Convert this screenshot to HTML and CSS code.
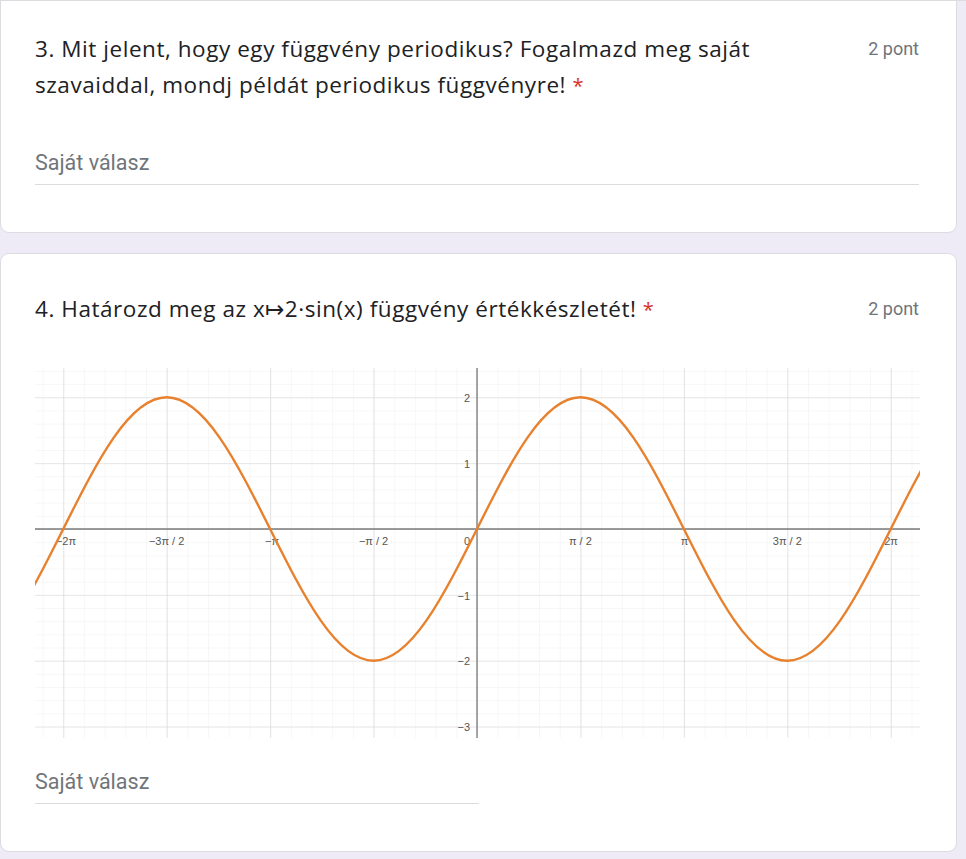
FILE: index.html
```html
<!DOCTYPE html>
<html lang="hu">
<head>
<meta charset="utf-8">
<title>Kérdőív</title>
<link rel="stylesheet" href="styles.css">
</head>
<body>
<div class="topline"></div>
<main class="form">
  <section class="card card-first">
    <div class="q-head">
      <div class="q-title">3. Mit jelent, hogy egy függvény periodikus? Fogalmazd meg saját szavaiddal, mondj példát periodikus függvényre! <span class="req">*</span></div>
      <div class="q-points">2 pont</div>
    </div>
    <div class="answer answer-wide">Saját válasz</div>
  </section>

  <section class="card">
    <div class="q-head">
      <div class="q-title">4. Határozd meg az x↦2·sin(x) függvény értékkészletét! <span class="req">*</span></div>
      <div class="q-points">2 pont</div>
    </div>
    <svg class="graph" width="885" height="370" viewBox="0 0 885 370" xmlns="http://www.w3.org/2000/svg">
      <defs>
        <pattern id="minor" x="442" y="161" width="20.688" height="13.17" patternUnits="userSpaceOnUse">
          <path d="M0 0 V13.17 M0 0 H20.688" stroke="#efefef" stroke-width="1" fill="none"/>
        </pattern>
        <pattern id="major" x="442" y="161" width="103.44" height="65.85" patternUnits="userSpaceOnUse">
          <path d="M0 0 V65.85 M0 0 H103.44" stroke="#d6d6d6" stroke-width="1.2" fill="none"/>
        </pattern>
        <clipPath id="clip"><rect x="0" y="0" width="885" height="370"/></clipPath>
      </defs>
      <rect x="0" y="0" width="885" height="370" fill="#fff"/>
      <rect x="0" y="0" width="885" height="370" fill="url(#minor)"/>
      <rect x="0" y="0" width="885" height="370" fill="url(#major)"/>
      <line x1="0" y1="161" x2="885" y2="161" stroke="#7a7a7a" stroke-width="1.3"/>
      <line x1="442" y1="0" x2="442" y2="370" stroke="#7a7a7a" stroke-width="1.3"/>
      <g class="lbl" text-anchor="middle">
        <text x="31" y="177">−2π</text>
        <text x="131.6" y="177">−3π / 2</text>
        <text x="237" y="177">−π</text>
        <text x="338.6" y="177">−π / 2</text>
        <text x="545.4" y="177">π / 2</text>
        <text x="649.5" y="177">π</text>
        <text x="752.3" y="177">3π / 2</text>
        <text x="856" y="177">2π</text>
      </g>
      <g class="lbl" text-anchor="end">
        <text x="435" y="177">0</text>
        <text x="435" y="34">2</text>
        <text x="435" y="99.5">1</text>
        <text x="435" y="231.5">−1</text>
        <text x="435" y="297">−2</text>
        <text x="435" y="363">−3</text>
      </g>
      <path clip-path="url(#clip)" fill="none" stroke="#e8812d" stroke-width="2.4" stroke-linecap="round"
        d="M-75.2 292.7
           c37.44 0 69.71 -64.23 103.44 -131.7
           c33.73 -67.47 66 -131.7 103.44 -131.7
           c37.44 0 69.71 64.23 103.44 131.7
           c33.73 67.47 66 131.7 103.44 131.7
           c37.44 0 69.71 -64.23 103.44 -131.7
           c33.73 -67.47 66 -131.7 103.44 -131.7
           c37.44 0 69.71 64.23 103.44 131.7
           c33.73 67.47 66 131.7 103.44 131.7
           c37.44 0 69.71 -64.23 103.44 -131.7
           c33.73 -67.47 66 -131.7 103.44 -131.7"/>
    </svg>
    <div class="answer answer-narrow">Saját válasz</div>
  </section>
</main>
</body>
</html>
```

FILE: styles.css
```css
* { box-sizing: border-box; }

html, body {
  margin: 0;
  padding: 0;
}

body {
  background: #eeebf7;
  width: 966px;
  height: 859px;
  overflow: hidden;
}

.topline {
  position: fixed;
  top: 0;
  left: 0;
  right: 0;
  height: 1px;
  background: #dadce0;
  z-index: 2;
}

.form {
  display: flex;
  flex-direction: column;
  gap: 20px;
  width: 957px;
  margin-top: -7px;
}

.card {
  background: #fff;
  border: 1px solid #dadce0;
  border-radius: 9px;
  padding: 37px 37px 47px 34px;
}

.q-head {
  display: flex;
  align-items: flex-start;
  gap: 36px;
}

.q-title {
  flex: 1;
  font-family: "Open Sans", Lato, sans-serif;
  font-size: 22.5px;
  line-height: 36px;
  letter-spacing: 0.55px;
  color: #202124;
}

.req {
  color: #d93025;
  font-size: 20px;
  line-height: 0;
}

.q-points {
  font-family: Roboto, "Liberation Sans", sans-serif;
  font-size: 18px;
  line-height: 36px;
  color: #70757a;
  white-space: nowrap;
}

.answer {
  font-family: Roboto, "Liberation Sans", sans-serif;
  font-size: 21.5px;
  line-height: 30px;
  color: #70757a;
  padding-bottom: 6px;
  border-bottom: 1px solid #dadce0;
}

.answer-wide {
  margin-top: 45px;
}

.answer-narrow {
  margin-top: 29px;
  width: 444px;
}

.graph {
  display: block;
  margin-top: 41px;
}

.lbl text {
  font-family: "Liberation Sans", Arial, sans-serif;
  font-size: 11px;
  fill: #555;
}
```
